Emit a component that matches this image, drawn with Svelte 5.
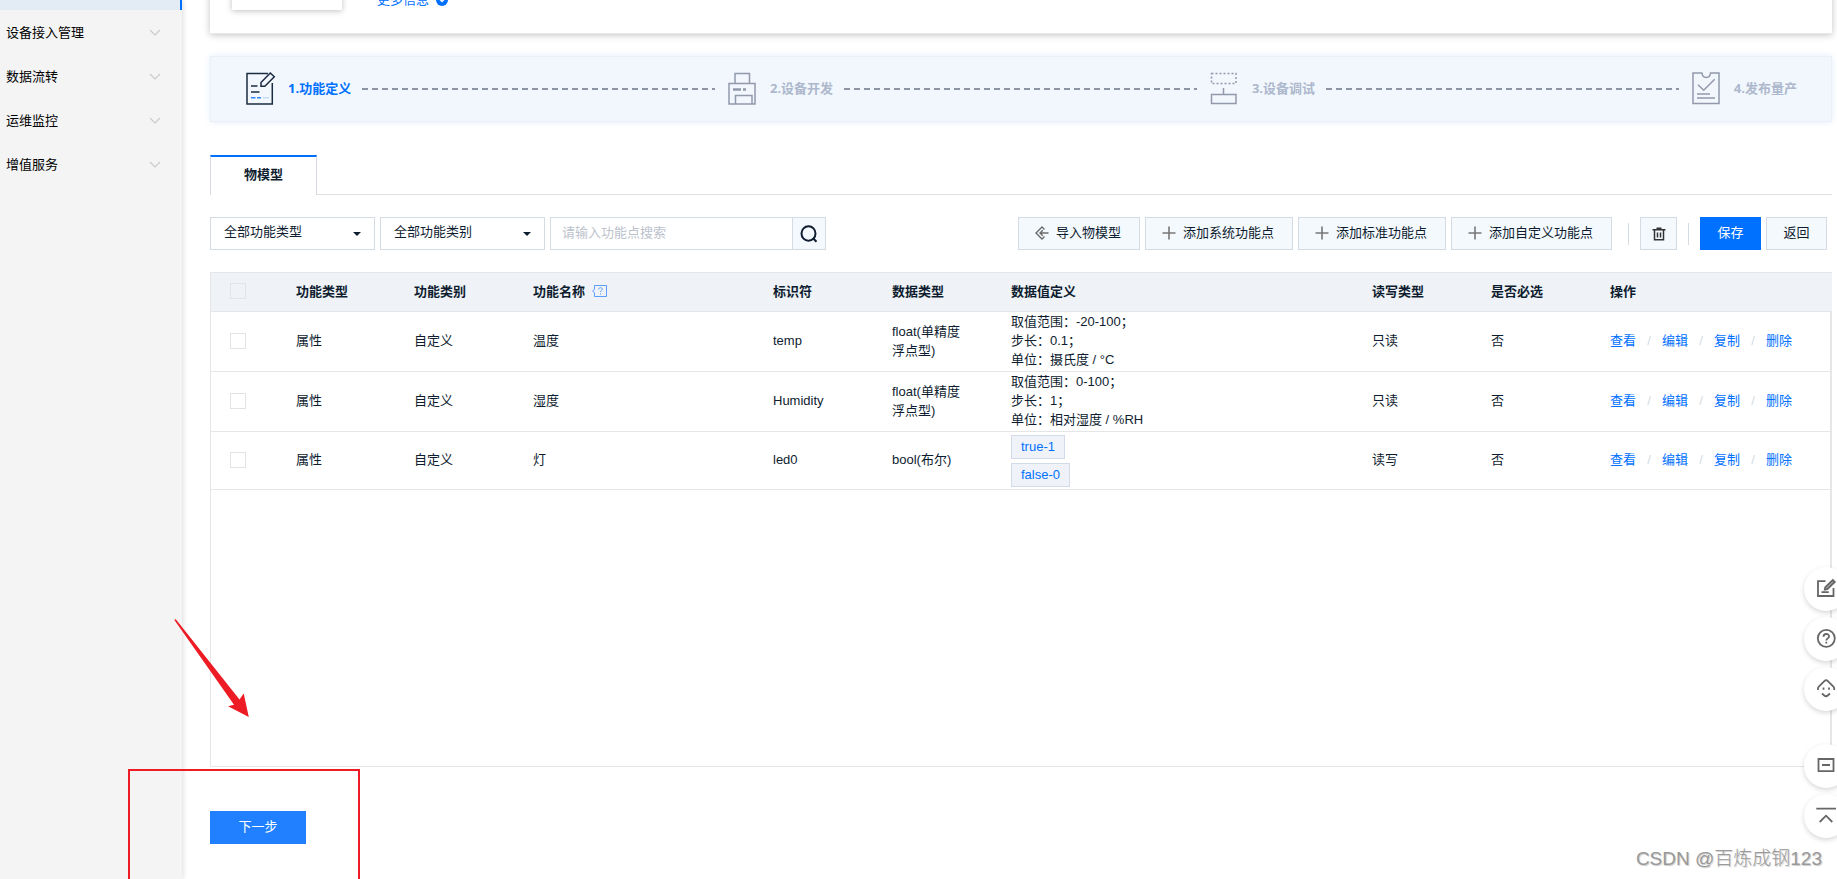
<script>
  const menu = ['设备接入管理', '数据流转', '运维监控', '增值服务'];

  const steps = ['1.功能定义', '2.设备开发', '3.设备调试', '4.发布量产'];

  const addButtons = ['添加系统功能点', '添加标准功能点', '添加自定义功能点'];

  const columns = [118, 119, 240, 119, 119, 361, 119, 119, 242];

  const rows = [
    {
      type: '属性', kind: '自定义', name: '温度', id: 'temp', data: 'float(单精度浮点型)',
      lines: ['取值范围：-20-100；', '步长：0.1；', '单位：摄氏度 / °C'], access: '只读', required: '否'
    },
    {
      type: '属性', kind: '自定义', name: '湿度', id: 'Humidity', data: 'float(单精度浮点型)',
      lines: ['取值范围：0-100；', '步长：1；', '单位：相对湿度 / %RH'], access: '只读', required: '否'
    },
    {
      type: '属性', kind: '自定义', name: '灯', id: 'led0', data: 'bool(布尔)',
      tags: ['true-1', 'false-0'], access: '读写', required: '否'
    }
  ];

  const actions = ['查看', '编辑', '复制', '删除'];
</script>

<div class="shell">
  <nav class="sidebar">
    <div class="active"></div>
    {#each menu as item}
      <button class="menu-item">
        <span>{item}</span>
        <svg width="12" height="8" viewBox="0 0 12 8"><path d="M1 1l5 5 5-5" fill="none" stroke="#cbcbcb" stroke-width="1.2" /></svg>
      </button>
    {/each}
  </nav>

  <main>
    <section class="product">
      <div class="thumb"></div>
      <a class="more" href="#more">
        更多信息
        <svg width="12" height="12" viewBox="0 0 12 12"><circle cx="6" cy="6" r="6" fill="#0070ff" /><path d="M3.5 5L6 7.5 8.5 5" fill="none" stroke="#fff" stroke-width="1.3" /></svg>
      </a>
    </section>

    <ol class="steps">
      {#each steps as step, i}
        <li class:current={i === 0}>
          <svg width="30" height="34" viewBox="0 0 30 34" fill="none" stroke-width="1.5">
            {#if i === 0}
              <g stroke="#1b2b40">
                <path d="M22 1.5H1V32h25.3V11" />
                <path d="M24.3 1l4 3.8-9.5 9.4H15v-3.7z" />
                <path d="M5 14h6.5M5 20h8.5" />
              </g>
              <path d="M5 25.8h4.5M11 25.8h4" stroke="#2b86ff" />
              <path d="M17 25.8h6" stroke="#c5dcfb" />
            {:else if i === 1}
              <g stroke="#9199aa">
                <path d="M7 11.5v-10h14.5v10M1 11.5h26V32H1zM7.5 32v-8.5H24V32" />
                <path d="M5 17.5h8M15 17.5h3" stroke-width="2.6" />
              </g>
            {:else if i === 2}
              <g stroke="#9199aa">
                <path d="M1.5 1.5h24.500v10H1.500z" stroke-dasharray="2 2" />
                <path d="M13.500 16v6.500M1.500 22.500h24.500v9H1.500z" />
              </g>
            {:else}
              <g stroke="#9199aa">
                <path d="M1 1h9c.5 6 8 6 8.500 0H27v30.500H1z" />
                <path d="M6 12.700l5.700 5.500L22.700 7.300M5 22h13M5 26h18" />
              </g>
            {/if}
          </svg>
          <span class="label">{step}</span>
          {#if i < 3}<i class="dash"></i>{/if}
        </li>
      {/each}
    </ol>

    <div class="tabs" role="tablist">
      <button class="tab" role="tab" aria-selected="true">物模型</button>
    </div>

    <div class="toolbar">
      <div class="filters">
        <div class="select">
          <select aria-label="功能类型"><option>全部功能类型</option></select>
        </div>
        <div class="select">
          <select aria-label="功能类别"><option>全部功能类别</option></select>
        </div>
        <div class="search">
          <input type="text" aria-label="搜索功能点" placeholder="请输入功能点搜索" />
          <button aria-label="搜索">
            <svg width="18" height="18" viewBox="0 0 18 18" fill="none" stroke="#0e1c2f" stroke-width="2"><ellipse cx="8.500" cy="8.500" rx="7" ry="7.300" /><path d="M12.800 13l3.700 3.800" /></svg>
          </button>
        </div>
      </div>

      <div class="commands">
        <button class="btn">
          <svg width="14" height="14" viewBox="0 0 14 14" fill="none" stroke="#6b6b6b" stroke-width="1.400"><path d="M9.500 3.500L7 1 1 7l6 6 2.500-2.500M13.500 7H5M7.800 4.200L5 7l2.800 2.800" /></svg>
          导入物模型
        </button>
        {#each addButtons as label}
          <button class="btn">
            <svg width="14" height="14" viewBox="0 0 14 14" stroke="#777" stroke-width="1.600"><path d="M7 .5v13M.5 7h13" /></svg>
            {label}
          </button>
        {/each}
        <i class="bar"></i>
        <button class="btn icon" aria-label="删除所选">
          <svg width="14" height="14" viewBox="0 0 14 14" fill="none" stroke="#333" stroke-width="1.500"><path d="M.5 2.800h13M4.500 1.200h5M2.500 3v9.800h9V3M5.500 5.500v5M8.500 5.500v5" /></svg>
        </button>
        <i class="bar"></i>
        <button class="btn primary">保存</button>
        <button class="btn back">返回</button>
      </div>
    </div>

    <div class="table-box">
      <table>
        <colgroup>
          <col style="width: 65px" />
          {#each columns as width}<col style="width: {width}px" />{/each}
        </colgroup>
        <thead>
          <tr>
            <th><input type="checkbox" aria-label="全选" /></th>
            <th>功能类型</th>
            <th>功能类别</th>
            <th>
              <span class="with-help">功能名称
                <svg width="15" height="12" viewBox="0 0 15 12" fill="none" stroke="#5a9dfa"><path d="M2.500.5h12v11h-12V8L.7 6l1.800-2z" /><path d="M6.700 4.300c0-2.200 3.600-2.200 3.600 0 0 1.200-1.800 1.200-1.800 2.700M8.500 8.300v1.200" /></svg>
              </span>
            </th>
            <th>标识符</th>
            <th>数据类型</th>
            <th>数据值定义</th>
            <th>读写类型</th>
            <th>是否必选</th>
            <th>操作</th>
          </tr>
        </thead>
        <tbody>
          {#each rows as row}
            <tr>
              <td><input type="checkbox" aria-label="选择 {row.name}" /></td>
              <td>{row.type}</td>
              <td>{row.kind}</td>
              <td>{row.name}</td>
              <td>{row.id}</td>
              <td>{row.data}</td>
              <td>
                {#if row.lines}
                  {#each row.lines as line}<div>{line}</div>{/each}
                {:else}
                  <div class="tags">
                    {#each row.tags as tag}<span class="tag">{tag}</span>{/each}
                  </div>
                {/if}
              </td>
              <td>{row.access}</td>
              <td>{row.required}</td>
              <td>
                <div class="actions">
                  {#each actions as action, i}
                    {#if i > 0}<span class="slash">/</span>{/if}
                    <a href="#{row.id}">{action}</a>
                  {/each}
                </div>
              </td>
            </tr>
          {/each}
        </tbody>
      </table>
    </div>

    <footer><button class="next">下一步</button></footer>
  </main>

  <div class="floaters">
    <button aria-label="反馈">
      <svg viewBox="0 0 24 24"><path d="M11.500 4.200H4V19h15.500v-8M7.500 15.200h7.300" /><path d="M10.800 12.700l.5-2.500L18.800 3l2 2-7.500 7.200z" fill="#aaa" /></svg>
    </button>
    <button aria-label="帮助">
      <svg viewBox="0 0 24 24"><circle cx="12.300" cy="11.300" r="8.500" /><path d="M9.500 9.800c0-3.700 5.600-3.700 5.600-.3 0 1.900-2.800 1.900-2.800 4M12.300 14.800v1.600" /></svg>
    </button>
    <button aria-label="客服">
      <svg viewBox="0 0 24 24"><path d="M4 13v-1.500c0-.7.3-1.300.8-1.800l5.800-5.900c.9-.9 2.100-.9 3 0l5.800 5.900c.5.500.8 1.100.8 1.800V13M8 16.500l2.300 2c1.100 1 2.300 1 3.400 0l2.300-2M9.500 10.500v2.200M15 10.500v2.200" /></svg>
    </button>
    <button class="apart" aria-label="收起">
      <svg viewBox="0 0 24 24"><path d="M4.500 5h15v12.200h-15zM8 11h8" /></svg>
    </button>
    <button aria-label="回到顶部">
      <svg viewBox="0 0 24 24"><path d="M2.300 4.700H22M5.700 18l6.300-6.300 6.300 6.300" /></svg>
    </button>
  </div>

  <svg class="arrow" width="76" height="100" viewBox="0 0 76 100" aria-hidden="true"><path d="M.2.800L1.800.3 65.500 80.500l4.200-6L74.800 98 54 87.300l6-1.500z" fill="#ed1c24" /></svg>
  <div class="frame"></div>
  <div class="watermark">CSDN @百炼成钢123</div>
</div>

<style>
  :global(body) {
    overflow: hidden;
    background: #fff;
  }

  .shell,
  .shell button,
  .shell input,
  .shell select {
    font-family: 'Liberation Sans', 'Noto Sans CJK SC', sans-serif;
    font-size: 13px;
    color: #0e1c2f;
  }

  .shell {
    position: relative;
    display: flex;
    height: 100vh;
    overflow: hidden;
  }

  .shell * {
    box-sizing: border-box;
  }

  button {
    padding: 0;
    border: 0;
    background: none;
    white-space: nowrap;
    cursor: pointer;
  }

  svg {
    display: block;
    flex: none;
  }

  a {
    color: #0070ff;
    text-decoration: none;
  }

  .sidebar {
    flex: none;
    width: 182px;
    background: #f4f4f4;
    box-shadow: 1px 0 5px rgba(0, 0, 0, 0.14);
  }

  .active {
    height: 10px;
    border-right: 2px solid #0070ff;
    background: #e3ebf5;
  }

  .shell .menu-item {
    display: flex;
    align-items: center;
    justify-content: space-between;
    width: 100%;
    height: 44px;
    padding: 2px 21px 0 6px;
    color: #000;
  }

  .menu-item span {
    padding-bottom: 4px;
  }

  main {
    display: flex;
    flex: 1;
    flex-direction: column;
    min-width: 0;
    height: calc(100vh + 60px);
    margin-top: -60px;
    padding: 0 5px 35px 28px;
  }

  .product {
    display: flex;
    flex: none;
    align-items: flex-end;
    gap: 35px;
    height: 94px;
    padding: 0 22px 23px;
    border-bottom: 1px solid #e8e8e8;
    box-shadow: 0 1px 7px rgba(0, 0, 0, 0.24);
  }

  .thumb {
    width: 110px;
    height: 60px;
    box-shadow: 0 1px 6px rgba(0, 0, 0, 0.25);
  }

  .more {
    display: flex;
    align-items: center;
    gap: 7px;
    line-height: 20px;
  }

  .steps {
    display: flex;
    flex: none;
    align-items: center;
    height: 66px;
    margin: 22px 0 33px;
    padding: 0 34px 0 35px;
    list-style: none;
    border: 1px solid #eceff4;
    background: #f2f7fe;
    box-shadow: 0 0 6px rgba(0, 112, 255, 0.12);
  }

  .steps li {
    display: flex;
    flex: 1;
    align-items: center;
  }

  .steps li:last-child {
    flex: none;
  }

  .label {
    margin-left: 12px;
    padding-bottom: 2px;
    font-family: 'Open Sans', 'Noto Sans CJK SC', sans-serif;
    font-weight: 700;
    line-height: 20px;
    color: #adb8cc;
    white-space: nowrap;
  }

  .current .label {
    color: #0070ff;
  }

  .dash {
    flex: 1;
    height: 2px;
    margin: 0 13px 0 11px;
    background: repeating-linear-gradient(90deg, #8d95a5 0 6px, transparent 6px 10px);
  }

  .tabs {
    display: flex;
    flex: none;
    height: 40px;
    box-shadow: inset 0 -1px #dfe1e6;
  }

  .tab {
    width: 107px;
    padding-bottom: 6px;
    border: 1px solid #d5dae3;
    border-top: 2px solid #0070ff;
    border-bottom: 0;
    background: #fff;
    font-weight: 700;
  }

  .toolbar {
    display: flex;
    flex: none;
    justify-content: space-between;
    height: 33px;
    margin: 22px 5px 22px 0;
  }

  .filters,
  .commands {
    display: flex;
    align-items: center;
    gap: 5px;
  }

  .select {
    position: relative;
  }

  .select::after {
    content: '';
    position: absolute;
    top: 15px;
    right: 14px;
    border: 4px solid transparent;
    border-top-color: #0e1c2f;
    border-bottom: 0;
    pointer-events: none;
  }

  select {
    display: block;
    width: 165px;
    height: 33px;
    padding: 0 28px 4px 13px;
    appearance: none;
    border: 1px solid #d5dbe3;
    border-radius: 0;
    background: #fff;
  }

  .search {
    display: flex;
    width: 276px;
    height: 33px;
    border: 1px solid #d5dbe3;
  }

  .search input {
    flex: 1;
    min-width: 0;
    padding: 0 11px 2px;
    border: 0;
    outline: 0;
    background: #fff;
  }

  .search input::placeholder {
    color: #bcc2cc;
  }

  .search button {
    display: flex;
    align-items: center;
    justify-content: center;
    width: 33px;
    border-left: 1px solid #d5dbe3;
    background: #f4f9fe;
  }

  .btn {
    display: flex;
    align-items: center;
    justify-content: center;
    gap: 7px;
    height: 33px;
    padding: 0 18px 4px 16px;
    border: 1px solid #d5dbe3;
    background: #f4f9fe;
  }

  .btn svg {
    margin-top: 2px;
  }

  .btn.icon {
    width: 37px;
    padding: 0 0 2px;
  }

  .shell .btn.primary,
  .btn.back {
    width: 61px;
    padding: 0 0 4px;
  }

  .shell .btn.primary {
    border-color: #0070ff;
    background: #0070ff;
    color: #fff;
  }

  .bar {
    width: 1px;
    height: 22px;
    margin: 0 6px 0 11px;
    background: #d5dbe3;
  }

  .bar ~ .bar {
    margin: 0 6px;
  }

  .table-box {
    flex: 1;
    border: 1px solid #e5e6e8;
    border-right-width: 2px;
  }

  table {
    width: 100%;
    table-layout: fixed;
    border-spacing: 0;
    line-height: 19px;
  }

  th,
  td {
    padding: 0 20px 2px;
    border-bottom: 1px solid #e5e6e8;
    text-align: left;
    vertical-align: middle;
  }

  th {
    height: 39px;
    background: #eff3f7;
    font-weight: 700;
    white-space: nowrap;
  }

  th:first-child,
  td:first-child {
    padding-left: 19px;
  }

  input[type='checkbox'] {
    display: block;
    width: 16px;
    height: 16px;
    margin: 0;
    appearance: none;
    border: 1px solid #e1e3e6;
  }

  .with-help {
    display: flex;
    align-items: center;
    gap: 7px;
  }

  .tags {
    display: flex;
    flex-direction: column;
    align-items: flex-start;
    gap: 4px;
    padding-top: 3px;
  }

  .tag {
    height: 24px;
    padding: 0 9px;
    border: 1px solid #d3dbe8;
    background: #eff3f9;
    line-height: 22px;
    color: #0070ff;
  }

  .actions {
    display: flex;
    white-space: nowrap;
  }

  .slash {
    width: 26px;
    text-align: center;
    color: #d5dbe3;
  }

  footer {
    flex: none;
    padding-top: 44px;
  }

  .shell .next {
    display: block;
    width: 96px;
    height: 33px;
    padding-bottom: 5px;
    background: #2080ff;
    color: #fff;
  }

  .floaters {
    position: absolute;
    right: -11px;
    bottom: 41px;
    display: flex;
    flex-direction: column;
    gap: 6px;
  }

  .floaters button {
    display: flex;
    align-items: center;
    justify-content: center;
    width: 44px;
    height: 44px;
    padding-bottom: 1px;
    border-radius: 50%;
    background: #fff;
    box-shadow: 0 2px 5px rgba(0, 0, 0, 0.16);
  }

  .floaters .apart {
    margin-top: 27px;
  }

  .floaters svg {
    width: 24px;
    height: 24px;
    fill: none;
    stroke: #666;
    stroke-width: 1.8px;
  }

  .arrow {
    position: absolute;
    left: 174px;
    bottom: 160px;
  }

  .frame {
    position: absolute;
    left: 128px;
    bottom: 0;
    width: 232px;
    height: 110px;
    border: 2px solid #ed1c24;
    border-bottom: 0;
    pointer-events: none;
  }

  .watermark {
    position: absolute;
    right: 15px;
    bottom: 5px;
    font-family: 'Liberation Sans', 'Noto Sans CJK SC', sans-serif;
    font-size: 19px;
    font-weight: 300;
    line-height: 30px;
    color: #999;
    text-shadow: 1px 1px 1px #ccc;
  }
</style>
